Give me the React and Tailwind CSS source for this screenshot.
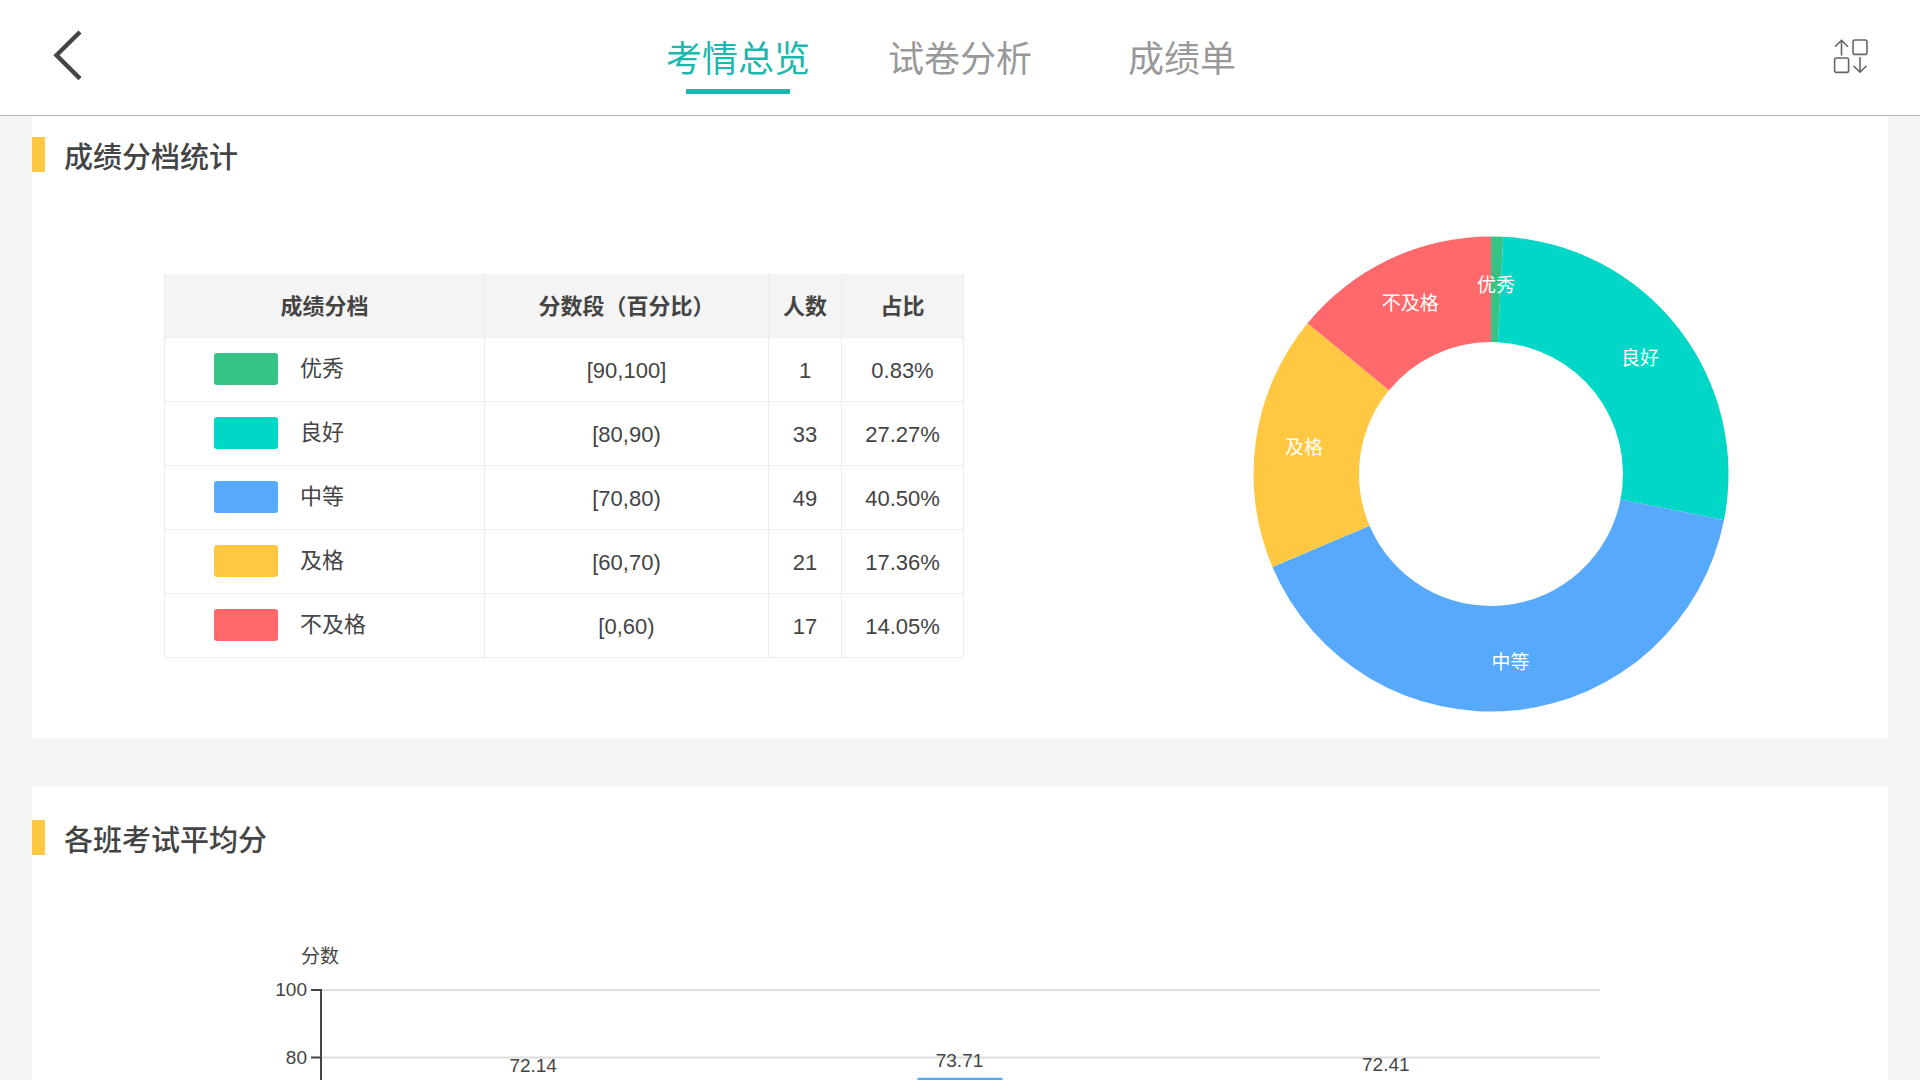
import React, { useState } from 'react';

const tabs = ['考情总览', '试卷分析', '成绩单'];

const levels = [
  { name: '优秀', range: '[90,100]', count: 1, percent: '0.83%', bg: 'bg-[#36c486]', fill: 'fill-[#36c486]' },
  { name: '良好', range: '[80,90)', count: 33, percent: '27.27%', bg: 'bg-[#00d7c6]', fill: 'fill-[#00d7c6]' },
  { name: '中等', range: '[70,80)', count: 49, percent: '40.50%', bg: 'bg-[#57aafb]', fill: 'fill-[#57aafb]' },
  { name: '及格', range: '[60,70)', count: 21, percent: '17.36%', bg: 'bg-[#ffc843]', fill: 'fill-[#ffc843]' },
  { name: '不及格', range: '[0,60)', count: 17, percent: '14.05%', bg: 'bg-[#ff696b]', fill: 'fill-[#ff696b]' },
];

const averages = [72.14, 73.71, 72.41];

const polar = (radius, turn) => {
  const angle = turn * Math.PI * 2;
  return [radius * Math.sin(angle), -radius * Math.cos(angle)];
};

const ringPath = (from, to, outer, inner) => {
  const large = to - from > 0.5 ? 1 : 0;
  const [x1, y1] = polar(outer, from);
  const [x2, y2] = polar(outer, to);
  const [x3, y3] = polar(inner, to);
  const [x4, y4] = polar(inner, from);
  return `M${x1} ${y1} A${outer} ${outer} 0 ${large} 1 ${x2} ${y2} L${x3} ${y3} A${inner} ${inner} 0 ${large} 0 ${x4} ${y4} Z`;
};

const SectionTitle = ({ children }) => (
  <div className="flex items-start gap-[19px]">
    <span className="h-[35px] w-[13px] bg-[#ffc843]"></span>
    <h2 className="text-[29px] leading-[42px] font-medium">{children}</h2>
  </div>
);

const LevelTable = () => (
  <table className="w-[800px] border-collapse text-center text-[22px] leading-8">
    <thead>
      <tr className="h-[63px] bg-[#f4f4f4]">
        <th className="w-[320px] border-x border-[#ececec] pt-1 font-bold">成绩分档</th>
        <th className="w-[284px] border-x border-[#ececec] pt-1 font-bold">分数段（百分比）</th>
        <th className="w-[73px] border-x border-[#ececec] pt-1 font-bold">人数</th>
        <th className="border-x border-[#ececec] pt-1 font-bold">占比</th>
      </tr>
    </thead>
    <tbody>
      {levels.map(level => (
        <tr key={level.name} className="h-16">
          <td className="border border-[#ececec]">
            <div className="flex items-center gap-[22px] pl-[49px]">
              <span className={`h-8 w-16 rounded-[3px] ${level.bg}`}></span>
              <span>{level.name}</span>
            </div>
          </td>
          <td className="border border-[#ececec] pt-1">{level.range}</td>
          <td className="border border-[#ececec] pt-1">{level.count}</td>
          <td className="border border-[#ececec] pt-1">{level.percent}</td>
        </tr>
      ))}
    </tbody>
  </table>
);

const LevelDonut = () => {
  const total = levels.reduce((sum, level) => sum + level.count, 0);
  let passed = 0;
  const slices = levels.map(level => {
    const from = passed / total;
    passed += level.count;
    return { ...level, from, to: passed / total };
  });

  return (
    <svg viewBox="-248 -248 496 496" className="w-full max-w-[496px]" role="img" aria-label="成绩分档统计">
      {slices.map(slice => (
        <path key={slice.name} d={ringPath(slice.from, slice.to, 237.5, 132)} className={slice.fill} />
      ))}
      {slices.map(slice => {
        const [x, y] = polar(189, (slice.from + slice.to) / 2);
        return (
          <text key={slice.name} x={x} y={y + 7} textAnchor="middle" className="fill-white text-[19px]">
            {slice.name}
          </text>
        );
      })}
    </svg>
  );
};

const AverageChart = () => {
  const left = 289;
  const right = 1568;
  const yOf = (score) => 128 + (100 - score) * 3.375;
  const step = (right - left) / averages.length;

  return (
    <svg viewBox="0 0 1856 520" className="w-full" role="img" aria-label="各班考试平均分">
      <text x={left - 1} y="101" textAnchor="middle" className="fill-[#444] text-[19px]">分数</text>
      {[100, 80].map(score => (
        <g key={score}>
          <line x1={left} x2={right} y1={yOf(score)} y2={yOf(score)} strokeWidth="2" className="stroke-[#dedede]" />
          <line x1={left - 10} x2={left} y1={yOf(score)} y2={yOf(score)} strokeWidth="2" className="stroke-[#444]" />
          <text x={left - 14} y={yOf(score) + 6} textAnchor="end" className="fill-[#444] text-[19px]">{score}</text>
        </g>
      ))}
      <line x1={left} x2={left} y1={yOf(100) - 1} y2={yOf(0)} strokeWidth="2" className="stroke-[#444]" />
      {averages.map((score, i) => {
        const center = left + step * (i + 0.5);
        return (
          <g key={score}>
            <rect x={center - 43} y={yOf(score) - 1} width="85" height={yOf(0) - yOf(score)} className="fill-[#57aafb]" />
            <text x={center - 1} y={yOf(score) - 12} textAnchor="middle" className="fill-[#444] text-[19px]">
              {score.toFixed(2)}
            </text>
          </g>
        );
      })}
    </svg>
  );
};

const App = () => {
  const [active, setActive] = useState('考情总览');

  return (
    <div className="flex h-screen flex-col bg-[#f4f4f4] font-['Liberation_Sans','Noto_Sans_CJK_SC',sans-serif] text-[#444]">
      <header className="grid h-29 shrink-0 grid-cols-[1fr_auto_1fr] border-b border-[#b8b8b8] bg-white">
        <button aria-label="返回" className="ml-12 flex h-28 w-12 items-center">
          <svg width="36" height="52" viewBox="0 0 36 52" fill="none" stroke="currentColor" strokeWidth="4.4">
            <path d="M32 2 L8.5 25.3 L32 48.6" />
          </svg>
        </button>

        <nav className="flex">
          {tabs.map(tab => (
            <button
              key={tab}
              onClick={() => setActive(tab)}
              className={`flex w-[222px] flex-col items-center gap-[3px] pt-[34px] text-4xl leading-[52px] font-normal ${active === tab ? 'text-[#1cb8ae]' : 'text-[#999]'}`}
            >
              {tab}
              {active === tab && <span className="h-[5px] w-[104px] bg-[#1cb8ae]"></span>}
            </button>
          ))}
        </nav>

        <button aria-label="切换" className="mr-12 flex h-28 w-12 items-center justify-end justify-self-end">
          <svg width="40" height="40" viewBox="0 0 40 40" fill="none" stroke="#666" strokeWidth="1.6" strokeLinecap="round" strokeLinejoin="round">
            <path d="M9.5 19 V4.5 M3.5 10.2 L9.5 4.2 L15.5 10.2" />
            <rect x="21" y="4" width="14" height="14.4" rx="2" />
            <rect x="2.6" y="22" width="14" height="14.4" rx="2" />
            <path d="M28 21.8 V36 M22 30.3 L28 36.3 L34 30.3" />
          </svg>
        </button>
      </header>

      <main className="min-h-0 flex-1 overflow-y-auto px-8 [scrollbar-width:none]">
        <section className="bg-white pt-[21px] pb-4">
          <SectionTitle>成绩分档统计</SectionTitle>
          <div className="mt-[47px] flex items-start gap-[130px] pl-33">
            <div className="pt-12">
              <LevelTable />
            </div>
            <div className="flex flex-1 justify-center">
              <LevelDonut />
            </div>
          </div>
        </section>

        <section className="mt-12 bg-white pt-[34px]">
          <SectionTitle>各班考试平均分</SectionTitle>
          <AverageChart />
        </section>
      </main>
    </div>
  );
};

export default App;
